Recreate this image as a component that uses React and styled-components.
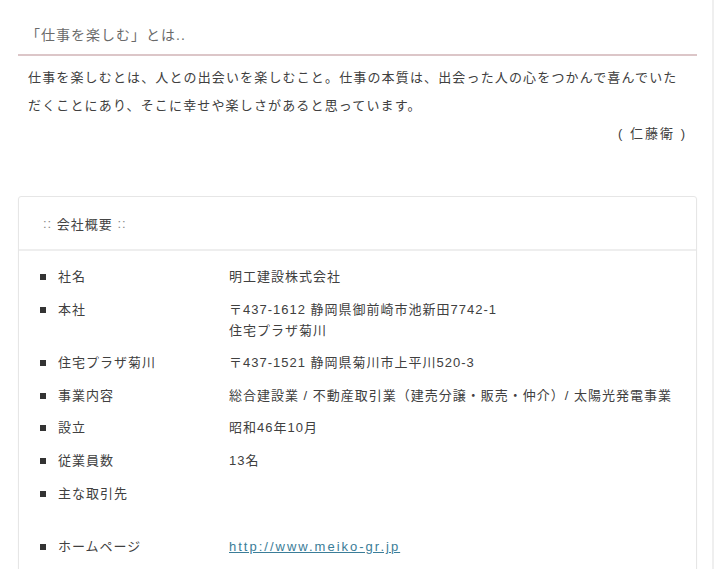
import React, { Fragment } from 'react';
import styled, { createGlobalStyle } from 'styled-components';

const COLORS = {
  TEXT: '#404040',
  SUB_TEXT: '#6a6a6a',
  LINE_PINK: '#dcc6c8',
  CARD_LINE: '#e6e6e6',
  LINK: '#3b7d98',
};

const GlobalStyle = createGlobalStyle`
  *, *::before, *::after {
    box-sizing: border-box;
  }
  html, body {
    margin: 0;
    padding: 0;
    background: #fff;
  }
  body {
    font-family: "Liberation Sans", "Noto Sans CJK JP", sans-serif;
    color: ${COLORS.TEXT};
  }
`

const Page = styled.div`
  width: 714px;
  min-height: 569px;
  padding: 0 15px 0 18px;
  border-right: 2px solid #efefef;
`
const Heading = styled.h2`
  margin: 0;
  padding: 24px 8px 8px;
  font-size: 14px;
  font-weight: normal;
  line-height: 22px;
  letter-spacing: 1px;
  color: ${COLORS.SUB_TEXT};
  border-bottom: 2px solid ${COLORS.LINE_PINK};
`
const Message = styled.div`
  margin: 8px 0 0;
  padding: 0 10px;
  font-size: 13px;
  line-height: 28px;
  letter-spacing: 1.15px;
  color: ${COLORS.TEXT};
`
const MessageText = styled.p`
  margin: 0;
`
const Signature = styled.p`
  margin: 0;
  text-align: right;
  letter-spacing: 2px;
`
const Card = styled.section`
  margin-top: 48px;
  border: 1px solid ${COLORS.CARD_LINE};
  border-radius: 3px;
  box-shadow: 0 1px 2px rgba(0, 0, 0, 0.04);
`
const CardHeader = styled.div`
  height: 54px;
  display: flex;
  align-items: center;
  padding-left: 24px;
  font-size: 13px;
  letter-spacing: 1px;
  color: #444;
  border-bottom: 2px solid #eeeeee;
`
const Colons = styled.span`
  color: #888;
`
const CardBody = styled.dl`
  margin: 0;
  padding: 15px 10px 24px 21px;
  font-size: 13px;
  line-height: 21px;
  letter-spacing: 1px;
`
const Row = styled.div`
  display: grid;
  grid-template-columns: 171px 1fr;
  padding-left: 18px;
  margin-bottom: 11.6px;
  position: relative;

  &::before {
    content: "";
    position: absolute;
    left: 0;
    top: 8px;
    width: 6px;
    height: 6px;
    background: #333;
  }
`
const Label = styled.dt`
  margin: 0;
`
const Value = styled.dd`
  margin: 0;
  white-space: nowrap;
`
const Link = styled.a`
  color: ${COLORS.LINK};
  letter-spacing: 2px;
  text-decoration: underline;
`

const profile = [
  { label: '社名', value: ['明工建設株式会社'] },
  { label: '本社', value: ['〒437-1612 静岡県御前崎市池新田7742-1', '住宅プラザ菊川'] },
  { label: '住宅プラザ菊川', value: ['〒437-1521 静岡県菊川市上平川520-3'] },
  { label: '事業内容', value: ['総合建設業 / 不動産取引業（建売分譲・販売・仲介）/ 太陽光発電事業'] },
  { label: '設立', value: ['昭和46年10月'] },
  { label: '従業員数', value: ['13名'] },
  { label: '主な取引先', value: ['', ''] },
];

const App = () => {
  return (
    <Fragment>
      <GlobalStyle />
      <Page>
        <Heading>「仕事を楽しむ」とは..</Heading>
        <Message>
          <MessageText>
            仕事を楽しむとは、人との出会いを楽しむこと。仕事の本質は、出会った人の心をつかんで喜んでいただくことにあり、そこに幸せや楽しさがあると思っています。
          </MessageText>
          <Signature>( 仁藤衛 )</Signature>
        </Message>
        <Card>
          <CardHeader>
            <Colons>::</Colons>&nbsp;会社概要&nbsp;<Colons>::</Colons>
          </CardHeader>
          <CardBody>
            {profile.map((item) => (
              <Row key={item.label}>
                <Label>{item.label}</Label>
                <Value>
                  {item.value.map((line, index) => (
                    <Fragment key={index}>
                      {index > 0 && <br />}
                      {line || '\u00a0'}
                    </Fragment>
                  ))}
                </Value>
              </Row>
            ))}
            <Row>
              <Label>ホームページ</Label>
              <Value>
                <Link href="http://www.meiko-gr.jp">http://www.meiko-gr.jp</Link>
              </Value>
            </Row>
          </CardBody>
        </Card>
      </Page>
    </Fragment>
  )
}

export default App
